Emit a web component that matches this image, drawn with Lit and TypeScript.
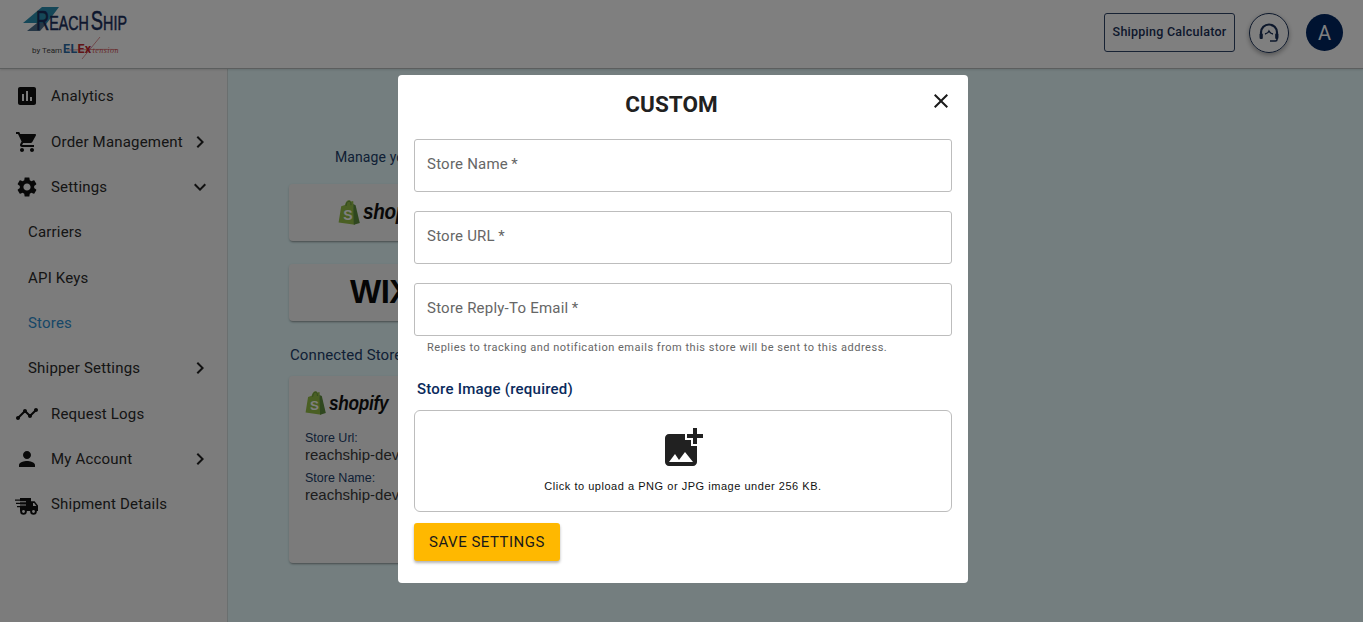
import { LitElement, html, css, svg } from "lit";
import { customElement } from "lit/decorators.js";

const P = {
  analytics: "M19 3H5c-1.1 0-2 .9-2 2v14c0 1.1.9 2 2 2h14c1.1 0 2-.9 2-2V5c0-1.1-.9-2-2-2zM9 17H7v-7h2v7zm4 0h-2V7h2v10zm4 0h-2v-4h2v4z",
  cart: "M7 18c-1.1 0-1.99.9-1.99 2S5.9 22 7 22s2-.9 2-2-.9-2-2-2zM1 2v2h2l3.6 7.59-1.35 2.45c-.16.28-.25.61-.25.96 0 1.1.9 2 2 2h12v-2H7.42c-.14 0-.25-.11-.25-.25l.03-.12.9-1.63h7.45c.75 0 1.41-.41 1.75-1.03l3.58-6.49c.08-.14.12-.31.12-.48 0-.55-.45-1-1-1H5.21l-.94-2H1zm16 16c-1.1 0-1.99.9-1.99 2s.89 2 1.99 2 2-.9 2-2-.9-2-2-2z",
  gear: "M19.14 12.94c.04-.3.06-.61.06-.94 0-.32-.02-.64-.07-.94l2.03-1.58c.18-.14.23-.41.12-.61l-1.92-3.32c-.12-.22-.37-.29-.59-.22l-2.39.96c-.5-.38-1.03-.7-1.62-.94l-.36-2.54c-.04-.24-.24-.41-.48-.41h-3.84c-.24 0-.43.17-.47.41l-.36 2.54c-.59.24-1.13.57-1.62.94l-2.39-.96c-.22-.08-.47 0-.59.22L2.74 8.87c-.12.21-.08.47.12.61l2.03 1.58c-.05.3-.09.63-.09.94s.02.64.07.94l-2.03 1.58c-.18.14-.23.41-.12.61l1.92 3.32c.12.22.37.29.59.22l2.39-.96c.5.38 1.03.7 1.62.94l.36 2.54c.05.24.24.41.48.41h3.84c.24 0 .44-.17.47-.41l.36-2.54c.59-.24 1.13-.56 1.62-.94l2.39.96c.22.08.47 0 .59-.22l1.92-3.32c.12-.22.07-.47-.12-.61l-2.01-1.58zM12 15.6c-1.98 0-3.6-1.62-3.6-3.6s1.62-3.6 3.6-3.6 3.6 1.62 3.6 3.6-1.62 3.6-3.6 3.6z",
  timeline: "M23 8c0 1.1-.9 2-2 2-.18 0-.35-.02-.51-.07l-3.56 3.55c.05.16.07.34.07.52 0 1.1-.9 2-2 2s-2-.9-2-2c0-.18.02-.36.07-.52l-2.55-2.55c-.16.05-.34.07-.52.07s-.36-.02-.52-.07l-4.55 4.56c.05.16.07.33.07.51 0 1.1-.9 2-2 2s-2-.9-2-2 .9-2 2-2c.18 0 .35.02.51.07l4.56-4.55C8.02 9.36 8 9.18 8 9c0-1.1.9-2 2-2s2 .9 2 2c0 .18-.02.36-.07.52l2.55 2.55c.16-.05.34-.07.52-.07s.36.02.52.07l3.55-3.56C19.02 8.35 19 8.18 19 8c0-1.1.9-2 2-2s2 .9 2 2z",
  person: "M12 12c2.21 0 4-1.79 4-4s-1.79-4-4-4-4 1.79-4 4 1.79 4 4 4zm0 2c-2.67 0-8 1.34-8 4v2h16v-2c0-2.66-5.33-4-8-4z",
  right: "M10 6 8.59 7.41 13.17 12l-4.58 4.59L10 18l6-6z",
  down: "M16.59 8.59 12 13.17 7.41 8.59 6 10l6 6 6-6z",
  close: "M19 6.41 17.59 5 12 10.59 6.41 5 5 6.41 10.59 12 5 17.59 6.41 19 12 13.41 17.59 19 19 17.59 13.41 12z",
  addPhoto: "M19 7v2.99s-1.99.01-2 0V7h-3s.01-1.99 0-2h3V2h2v3h3v2h-3zm-3 4V8h-3V5H5c-1.1 0-2 .9-2 2v12c0 1.1.9 2 2 2h12c1.1 0 2-.9 2-2v-8h-3zM5 19l3-4 2 3 3-4 4 5H5z",
};

const icon = (d: string, cls = "") => html`<svg class="ic ${cls}" viewBox="0 0 24 24"><path d=${d}></path></svg>`;

const truckIcon = html`<svg class="ic lead" viewBox="0 0 24 24">
  ${svg`<path d="M5 6h11v13H5zM16 9.2h3.6L23 13.5V19h-7z" fill="#111"></path>
  <path d="M18 11v3h3.4l-2.3-3z" fill="#f7f7f7"></path>
  <circle cx="8.5" cy="19.5" r="3.3" fill="#111"></circle><circle cx="8.5" cy="19.5" r="1.4" fill="#f7f7f7"></circle>
  <circle cx="18.5" cy="19.5" r="3.3" fill="#111"></circle><circle cx="18.5" cy="19.5" r="1.4" fill="#f7f7f7"></circle>
  <path d="M0 8.2h10M1 11.4h9M2 14.6h8" stroke="#111" stroke-width="1.3" fill="none"></path>
  <path d="M4 9.8h7M4 13h7" stroke="#f7f7f7" stroke-width="1.1" fill="none"></path>`}
</svg>`;

const bag = (cls: string) => html`<svg class=${cls} viewBox="0 0 22 25">
  <path d="M.6 22.4 3.2 6.2 7 5C7.6 2.2 9 .2 11 .2c1 0 1.6.5 2 1.2l2.2-.3L17 24.8.6 22.4z" fill="#95bf47"></path>
  <path d="M15.2 4 17.6 5.2 21.8 23 15.8 24.8z" fill="#5e8e3e"></path>
  <path d="M8 6C8.3 3 9.6 1.2 11 1.2s2 1.6 2 4" fill="none" stroke="#5e8e3e" stroke-width=".9"></path>
  <text x="5.2" y="19.5" font-family="Liberation Sans" font-weight="700" font-size="14" fill="#fff">S</text>
</svg>`;

type Item = { label: string; icon?: string; chev?: string; sub?: boolean; active?: boolean; truck?: boolean };
const NAV: Item[] = [
  { label: "Analytics", icon: P.analytics },
  { label: "Order Management", icon: P.cart, chev: P.right },
  { label: "Settings", icon: P.gear, chev: P.down },
  { label: "Carriers", sub: true },
  { label: "API Keys", sub: true },
  { label: "Stores", sub: true, active: true },
  { label: "Shipper Settings", sub: true, chev: P.right },
  { label: "Request Logs", truck: false, icon: P.timeline },
  { label: "My Account", icon: P.person, chev: P.right },
  { label: "Shipment Details", truck: true },
];

@customElement("app-root")
export class AppRoot extends LitElement {
  static styles = css`
    :host { display: block; font-family: Roboto, "Liberation Sans", sans-serif; }
    * { box-sizing: border-box; }
    .app { width: 1363px; height: 622px; overflow: hidden; display: flex; flex-direction: column; background: #e8fdff; color: #212121; }
    header { height: 69px; flex: none; background: #fff; border-bottom: 1px solid #b8bcbc; box-shadow: 0 1px 2px rgba(0,0,0,.12); display: flex; align-items: center; padding: 0 20px 0 23px; position: relative; }
    .logo { width: 110px; height: 62px; position: relative; margin-bottom: 5px; }
    .logo svg { position: absolute; left: 0; top: 0; width: 110px; height: 62px; }
    .brand { position: absolute; left: 13px; top: 7px; font-family: "Liberation Sans", sans-serif; font-size: 21px; line-height: 26px; color: #1a2f5c; white-space: nowrap; word-spacing: -3px; transform: scaleX(.68); transform-origin: left center; -webkit-text-stroke: .5px #1a2f5c; }
    .brand b { font-size: 27px; font-weight: 400; }
    .by { position: absolute; left: 9px; top: 41px; font-size: 8px; line-height: 14px; color: #444; white-space: nowrap; display: flex; align-items: baseline; gap: 1px; }
    .elex { font-size: 12.5px; font-weight: 700; color: #2a6aa5; letter-spacing: .3px; }
    .elex i { font-style: normal; color: #c4272c; }
    .tens { font-family: "Liberation Serif", serif; font-style: italic; font-size: 8px; color: #d0565a; margin-left: 0; letter-spacing: .5px; }
    .hr { margin-left: auto; display: flex; align-items: center; padding-bottom: 3px; }
    .calc { width: 131px; height: 39px; border: 1px solid #2f4468; border-radius: 3px; color: #1a3158; font-size: 12.5px; font-weight: 500; display: flex; align-items: center; justify-content: center; padding-bottom: 3px; letter-spacing: .25px; background: transparent; }
    .sup { width: 40px; height: 40px; border-radius: 50%; border: 1px solid #1a3158; margin-left: 14px; display: flex; align-items: center; justify-content: center; box-shadow: 0 2px 5px rgba(0,0,0,.35); }
    .sup svg { width: 24px; height: 24px; }
    .av { width: 37px; height: 37px; border-radius: 50%; background: #002662; color: #fff; margin-left: 17px; display: flex; align-items: center; justify-content: center; font-size: 20px; }

    .body { flex: 1; display: flex; min-height: 0; }
    nav { width: 228px; flex: none; background: #f8f8f8; border-right: 1px solid #d5dede; padding-top: 4.6px; }
    .item { height: 45.33px; display: flex; align-items: center; padding: 0 15px 0 15px; font-size: 15px; letter-spacing: .19px; color: #2a2a2a; }
    .item.sub { padding-left: 28px; }
    .item.active { color: #2f8fd0; }
    .item .lab { margin-left: 12px; }
    .item.sub .lab { margin-left: 0; }
    .ic { width: 24px; height: 24px; fill: currentColor; flex: none; display: block; }
    .item .ic.lead { color: #111; }
    .item .chev { margin-left: auto; color: #222; }
    .main { flex: 1; padding: 78px 0 0 61px; color: #22406b; }
    .manage { white-space: nowrap; font-size: 14px; line-height: 20px; margin-left: 46px; letter-spacing: .1px; }
    .card { width: 320px; background: #f7f7f7; border-radius: 4px; box-shadow: 0 2px 2px -1px rgba(0,0,0,.3), 0 1px 3px rgba(0,0,0,.15); }
    .logoCard { height: 57px; display: flex; align-items: center; padding-left: 49px; margin-top: 17px; }
    .logoCard .bag { width: 22px; height: 25px; }
    .word { display: inline-block; font-family: "Liberation Sans", sans-serif; font-weight: 700; font-style: italic; color: #111; letter-spacing: -.3px; transform: scaleX(.86); transform-origin: left center; }
    .logoCard .word { font-size: 22px; margin-left: 3px; padding-bottom: 2px; }
    .wixCard { margin-top: 23px; padding-left: 61px; padding-bottom: 2px; }
    .wix { font-family: "Liberation Sans", sans-serif; font-weight: 700; font-size: 33px; color: #0a0a0a; letter-spacing: -.5px; }
    .conn { font-size: 15px; line-height: 24px; margin: 22px 0 0 1px; letter-spacing: .1px; }
    .store { height: 187px; margin-top: 9px; padding: 15px 16px; }
    .store .top { display: flex; align-items: center; height: 24px; }
    .store .bag { width: 21px; height: 24px; }
    .store .word { font-size: 20px; margin-left: 3px; }
    .kv { font-family: "Liberation Sans", sans-serif; font-size: 12.5px; line-height: 14px; padding-bottom: 1px; color: #22406b; }
    .kv.a { margin-top: 16px; }
    .kv.b { margin-top: 8px; }
    .val { font-family: "Liberation Sans", sans-serif; font-size: 15px; line-height: 17px; color: #3a3a3a; }

    .overlay { position: fixed; inset: 0; background: rgba(0,0,0,.5); padding: 75px 0 0 398px; }
    .modal { width: 570px; height: 508px; background: #fff; border-radius: 4px; padding: 16px; display: flex; flex-direction: column; }
    .head { display: flex; align-items: flex-start; height: 48px; }
    h2 { flex: 1; margin: 0; text-align: center; font-size: 22.5px; line-height: 26px; font-weight: 700; color: #212121; }
    .x { width: 24px; height: 24px; margin: -2px -1px 0 0; color: #1a1a1a; flex: none; padding: 0; border: 0; background: none; }
    .field { height: 53px; border: 1px solid #bdbdbd; border-radius: 3px; display: flex; align-items: center; padding: 0 12px 3px; font-size: 15px; color: #666; letter-spacing: .22px; }
    .field + .field { margin-top: 19px; }
    .help { font-size: 11px; line-height: 13px; letter-spacing: .51px; color: #666; margin: 5px 0 0 13px; }
    .lbl { font-size: 15px; font-weight: 500; line-height: 20px; letter-spacing: .23px; color: #0a2a5c; margin: 25px 0 0 3px; }
    .upload { height: 102px; margin-top: 11px; border: 1px solid #bdbdbd; border-radius: 6px; display: flex; flex-direction: column; align-items: center; padding-top: 13px; }
    .upload .ic { width: 48px; height: 48px; color: #212121; }
    .upload p { margin: 8px 0 0; font-family: "Liberation Sans", sans-serif; font-size: 11px; line-height: 13px; letter-spacing: .53px; color: #111; }
    .save { width: 146px; height: 38px; margin-top: 11px; border: 0; border-radius: 3px; background: #ffb800; color: #1a1a1a; font-family: Roboto, sans-serif; font-size: 15px; letter-spacing: .5px; box-shadow: 0 2px 3px rgba(0,0,0,.3); padding: 0; }
  `;

  render() {
    return html`<div class="app">
      <header>
        <div class="logo">
          <svg viewBox="0 0 110 62">
            <polygon points="0,22 19,6 36,6 24,22" fill="#2a8fb0"></polygon>
            <polygon points="4,30 14,22 24,22 17,30" fill="#4d6f8c"></polygon>
            <path d="M59 58 77 36M44 49c12 0 30-1 50-.5" stroke="#c4272c" stroke-width=".5" fill="none"></path>
          </svg>
          <div class="brand"><b>R</b>EACH <b>S</b>HIP</div>
          <div class="by">by Team <span class="elex">EL<i>Ex</i></span><span class="tens">tension</span></div>
        </div>
        <div class="hr">
          <div class="calc">Shipping Calculator</div>
          <div class="sup">
            <svg viewBox="0 0 24 24" fill="none" stroke="#1a3158" stroke-width="2.2">
              <path d="M4 16v-4.5a8 8 0 0 1 16 0V16"></path>
              <path d="M8 13c1.8-.4 3.4-1.4 4-3 .8 1.6 2.2 2.6 4 3" stroke-width="1.3"></path>
              <rect x="2.6" y="12.5" width="3.2" height="5.5" rx="1" fill="#1a3158" stroke="none"></rect>
              <rect x="18.2" y="12.5" width="3.2" height="5.5" rx="1" fill="#1a3158" stroke="none"></rect>
              <path d="M20 17.5v1a1.5 1.5 0 0 1-1.5 1.5H13" stroke-width="1.6"></path>
            </svg>
          </div>
          <div class="av">A</div>
        </div>
      </header>
      <div class="body">
        <nav>
          ${NAV.map((n) => html`<div class="item ${n.sub ? "sub" : ""} ${n.active ? "active" : ""}">
            ${n.truck ? truckIcon : n.icon ? icon(n.icon, "lead") : ""}
            <span class="lab">${n.label}</span>
            ${n.chev ? icon(n.chev, "chev") : ""}
          </div>`)}
        </nav>
        <main class="main">
          <div class="manage">Manage yo</div>
          <div class="card logoCard">${bag("bag")}<span class="word">shopify</span></div>
          <div class="card logoCard wixCard"><span class="wix">WIX</span></div>
          <div class="conn">Connected Stores</div>
          <div class="card store">
            <div class="top">${bag("bag")}<span class="word">shopify</span></div>
            <div class="kv a">Store Url:</div>
            <div class="val">reachship-dev</div>
            <div class="kv b">Store Name:</div>
            <div class="val">reachship-dev</div>
          </div>
        </main>
      </div>
      <div class="overlay">
        <div class="modal">
          <div class="head"><h2>CUSTOM</h2><button class="x">${icon(P.close)}</button></div>
          <div class="field">Store Name\u2009*</div>
          <div class="field">Store URL\u2009*</div>
          <div class="field">Store Reply-To Email\u2009*</div>
          <div class="help">Replies to tracking and notification emails from this store will be sent to this address.</div>
          <div class="lbl">Store Image (required)</div>
          <div class="upload">${icon(P.addPhoto)}<p>Click to upload a PNG or JPG image under 256 KB.</p></div>
          <button class="save">SAVE SETTINGS</button>
        </div>
      </div>
    </div>`;
  }
}
